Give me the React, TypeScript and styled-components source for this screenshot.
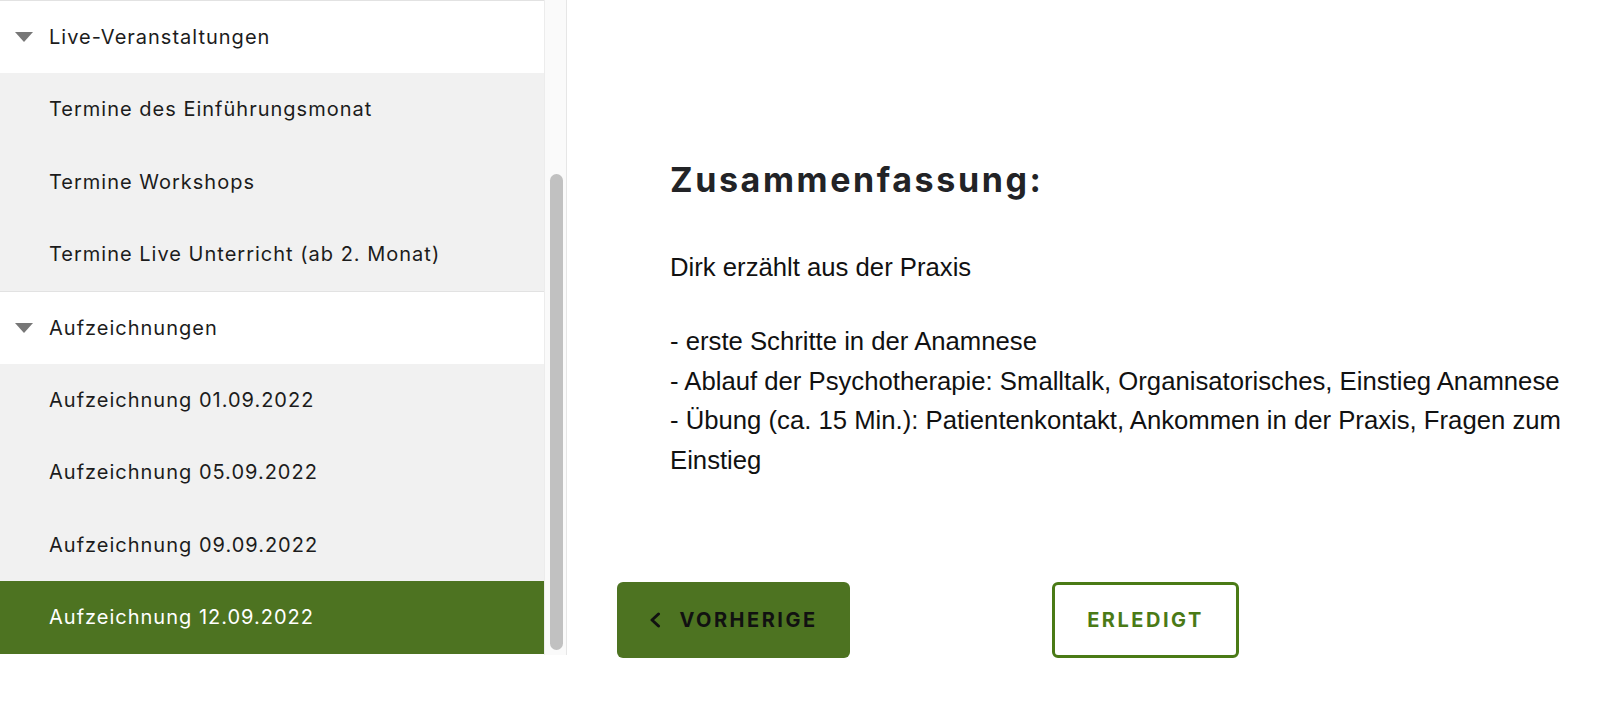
import React from "react";
import styled, { createGlobalStyle } from "styled-components";

const GlobalStyle = createGlobalStyle`
  html, body {
    margin: 0;
    padding: 0;
    background: #ffffff;
  }
  * {
    box-sizing: border-box;
  }
`;

interface NavItem {
  label: string;
  active?: boolean;
}

interface NavSection {
  title: string;
  items: NavItem[];
}

const sections: NavSection[] = [
  {
    title: "Live-Veranstaltungen",
    items: [
      { label: "Termine des Einführungsmonat" },
      { label: "Termine Workshops" },
      { label: "Termine Live Unterricht (ab 2. Monat)" },
    ],
  },
  {
    title: "Aufzeichnungen",
    items: [
      { label: "Aufzeichnung 01.09.2022" },
      { label: "Aufzeichnung 05.09.2022" },
      { label: "Aufzeichnung 09.09.2022" },
      { label: "Aufzeichnung 12.09.2022", active: true },
    ],
  },
];

const App = () => {
  return (
    <>
      <GlobalStyle />
      <Page>
        <Sidebar>
          <List>
            {sections.map((section) => (
              <Section key={section.title}>
                <SectionHeader>
                  <Caret />
                  {section.title}
                </SectionHeader>
                {section.items.map((item) => (
                  <Item key={item.label} active={item.active}>
                    {item.label}
                  </Item>
                ))}
              </Section>
            ))}
          </List>
          <ScrollTrack>
            <Thumb />
          </ScrollTrack>
        </Sidebar>
        <Main>
          <Content>
            <Heading>Zusammenfassung:</Heading>
            <Paragraph>Dirk erzählt aus der Praxis</Paragraph>
            <Paragraph>
              - erste Schritte in der Anamnese
              <br />- Ablauf der Psychotherapie: Smalltalk, Organisatorisches,
              Einstieg Anamnese
              <br />- Übung (ca. 15 Min.): Patientenkontakt, Ankommen in der
              Praxis, Fragen zum Einstieg
            </Paragraph>
          </Content>
          <Buttons>
            <PrevButton>
              <svg width="12" height="16" viewBox="0 0 12 16" fill="none">
                <path
                  d="M9.5 2L3 8l6.5 6"
                  stroke="#111"
                  strokeWidth="3"
                  strokeLinecap="round"
                  strokeLinejoin="round"
                />
              </svg>
              VORHERIGE
            </PrevButton>
            <DoneButton>ERLEDIGT</DoneButton>
          </Buttons>
        </Main>
      </Page>
    </>
  );
};

const Page = styled.div`
  display: flex;
  width: 1600px;
  height: 720px;
  background: #ffffff;
`;

const Sidebar = styled.aside`
  display: flex;
  width: 567px;
  height: 655px;
  flex-shrink: 0;
`;

const List = styled.nav`
  width: 544px;
  overflow: hidden;
  font-family: Inter, "Noto Sans", sans-serif;
  font-size: 20px;
  letter-spacing: 1px;
`;

const ScrollTrack = styled.div`
  width: 23px;
  padding: 174px 3px 0 5px;
  background: #fafafa;
  border-left: 1px solid #ececec;
  border-right: 1px solid #e6e6e6;
`;

const Thumb = styled.div`
  width: 13px;
  height: 476px;
  border-radius: 7px;
  background: #c1c1c1;
`;

const Section = styled.div``;

const SectionHeader = styled.div`
  display: flex;
  align-items: center;
  height: 73px;
  padding-left: 15px;
  border-top: 1px solid #e2e2e2;
  background: #ffffff;
  color: #1c1c1c;
`;

const Caret = styled.span`
  width: 0;
  height: 0;
  margin-right: 16px;
  border-left: 9px solid transparent;
  border-right: 9px solid transparent;
  border-top: 10px solid #777777;
`;

const Item = styled.div<{ active?: boolean }>`
  display: flex;
  align-items: center;
  height: 72.5px;
  padding-left: 49px;
  background: ${(p) => (p.active ? "#4d7321" : "#f1f1f1")};
  color: ${(p) => (p.active ? "#ffffff" : "#1c1c1c")};
`;

const Main = styled.div`
  flex: 1;
  padding: 0 30px 0 50px;
`;

const Content = styled.div`
  padding: 160px 0 0 53px;
  font-family: "Liberation Sans", Arial, sans-serif;
  font-size: 25.7px;
  line-height: 39.4px;
  color: #111111;
`;

const Heading = styled.h2`
  margin: 0 0 48px;
  font-family: Inter, "Noto Sans", sans-serif;
  font-size: 34px;
  font-weight: 700;
  letter-spacing: 2.6px;
  line-height: 40px;
  color: #222326;
`;

const Paragraph = styled.p`
  margin: 0 0 35px;
`;

const Buttons = styled.div`
  display: flex;
  align-items: center;
  gap: 202px;
  margin-top: 102px;
`;

const BaseButton = styled.button`
  display: flex;
  align-items: center;
  justify-content: center;
  gap: 18px;
  height: 76px;
  padding: 0;
  border-radius: 6px;
  font-family: Inter, "Noto Sans", sans-serif;
  font-size: 20px;
  font-weight: 700;
  letter-spacing: 2.5px;
  cursor: pointer;
`;

const PrevButton = styled(BaseButton)`
  width: 233px;
  border: none;
  background: #4d7321;
  color: #111111;
`;

const DoneButton = styled(BaseButton)`
  width: 187px;
  border: 3px solid #4a7a16;
  background: #ffffff;
  color: #4a7a16;
`;

export default App;
